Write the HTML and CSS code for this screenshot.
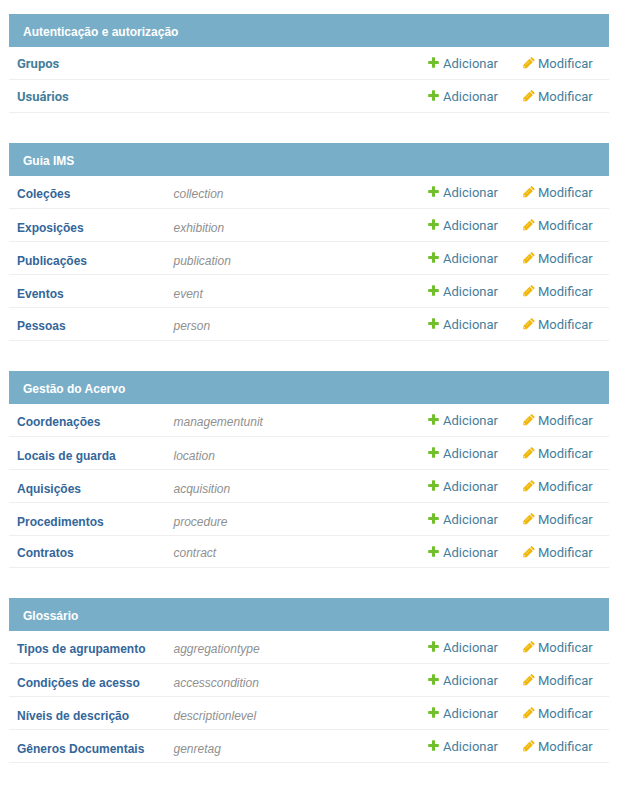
FILE: index.html
```
<!DOCTYPE html>
<html lang="pt-BR">
<head>
<meta charset="utf-8">
<title>Administração</title>
<link rel="stylesheet" href="styles.css">
</head>
<body>
<svg class="defs" aria-hidden="true">
  <symbol id="add" viewBox="0 0 11 11"><path d="M4 .8q0-.6.6-.6h1.800q.6 0 .6.6V4h3.200q.6 0 .6.6v1.800q0 .6-.6.6H7v3.200q0 .6-.6.6H4.600q-.6 0-.6-.6V7H.8q-.6 0-.6-.6V4.600q0-.6.6-.6H4z" fill="#70bf2b"/></symbol>
  <symbol id="edit" viewBox="0 0 12 12"><path d="M.3 11.300V8L6.600 1.800l3.300 3.300-6.300 6.200z" fill="#efb80b"/><path d="M7.200 1.200l.8-.8q.6-.6 1.200 0l2.100 2.100q.6.600 0 1.200l-.8.8z" fill="#efb80b"/><path d="M1.200 9.100l1.300 1.300-.6.200-.9-.9z" fill="#fff"/><path d="M3 7.700L6.600 4.100" stroke="#fff" stroke-opacity=".6" stroke-width=".6"/></symbol>
</svg>
<main id="groups"></main>
<script src="app.js"></script>
</body>
</html>
```
FILE: styles.css
```
body { margin: 0; background: #fff; }
.defs { display: none; }
main { display: flex; flex-direction: column; width: 600px; margin: 14px 0 0 9px; }
.group { margin-bottom: 30px; }
.group h2 { margin: 0; height: 33px; box-sizing: border-box; padding: 2px 14px 0; background: #79aec8; color: #fff; font: bold 12px/33px "Liberation Sans", Arial, sans-serif; }
.row { display: grid; grid-template-columns: 156.500px 254.500px 95px 78px; box-sizing: border-box; height: 33px; padding-left: 8px; border-bottom: 1px solid #eee; white-space: nowrap; }
.row.short { height: 32px; }
.name { font: bold 12px/16px "Liberation Sans", Arial, sans-serif; color: #336699; padding-top: 10px; }
.model { font: italic 12px/16px "Liberation Sans", Arial, sans-serif; color: #909090; padding-top: 10px; }
.low .name, .low .model { padding-top: 11px; }
.high .name, .high .model { padding-top: 9px; }
.auth .name { font: bold 13px/16px Roboto, sans-serif; color: #447e9b; padding-top: 9px; }
.action { display: flex; font: 13px/16px Roboto, sans-serif; color: #447e9b; padding-top: 9px; }
.action svg { width: 11px; height: 11px; margin: 1px 4px 0 0; flex: none; }
.action .edit { width: 12px; height: 12px; margin: 1px 3px 0 0; }
```
FILE: app.js
```
const groups = [
  ["Autenticação e autorização", "auth", [["Grupos", "", ""], ["Usuários", "", ""]]],
  ["Guia IMS", "", [["Coleções", "collection", ""], ["Exposições", "exhibition", "low"], ["Publicações", "publication", "low"], ["Eventos", "event", "low"], ["Pessoas", "person", ""]]],
  ["Gestão do Acervo", "", [["Coordenações", "managementunit", ""], ["Locais de guarda", "location", "low"], ["Aquisições", "acquisition", "low"], ["Procedimentos", "procedure", "low"], ["Contratos", "contract", "short high"]]],
  ["Glossário", "", [["Tipos de agrupamento", "aggregationtype", ""], ["Condições de acesso", "accesscondition", "low"], ["Níveis de descrição", "descriptionlevel", "low"], ["Gêneros Documentais", "genretag", "low"]]]
];
document.getElementById("groups").innerHTML = groups.map(([title, kind, rows]) =>
  `<section class="group ${kind}"><h2>${title}</h2>${rows.map(([name, model, cls]) =>
    `<div class="row ${cls}"><span class="name">${name}</span><span class="model">${model}</span>` +
    `<span class="action"><svg><use href="#add"/></svg>Adicionar</span>` +
    `<span class="action"><svg class="edit"><use href="#edit"/></svg>Modificar</span></div>`).join("")}</section>`).join("");
```
